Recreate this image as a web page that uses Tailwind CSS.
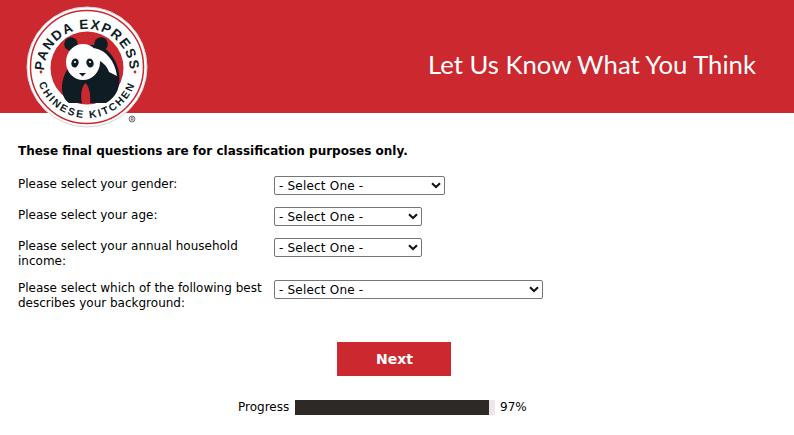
<!DOCTYPE html>
<html><head><meta charset="utf-8"><script src="https://cdn.jsdelivr.net/npm/@tailwindcss/browser@4"></script></head>
<body class="bg-white overflow-hidden font-['Verdana','DejaVu_Sans',sans-serif] text-[12px] leading-[15px] text-black">
<header class="relative h-[113px] bg-[#cb2830] flex items-center justify-end pr-[38px] pt-[14px]">
<h1 class="font-['Lato',sans-serif] text-[25.7px] leading-[34px] text-white">Let Us Know What You Think</h1>
<svg class="absolute left-[24px] top-[4px]" width="126" height="126" viewBox="24 4 126 126">
<circle cx="87" cy="67" r="60" fill="#fff" stroke="#d8d4d4" stroke-width="1"/>
<circle cx="87" cy="67" r="56.5" fill="none" stroke="#cb2830" stroke-width="1.5"/>
<circle cx="87" cy="68" r="36.5" fill="#cb2830"/>
<defs>
<path id="t" d="M 44 72 A 43 43 0 0 1 130 72"/>
<path id="b" d="M 36 67 A 51 51 0 0 0 138 67"/>
</defs>
<text font-family="Liberation Sans" font-weight="700" font-size="13.5" fill="#0f1c24" letter-spacing="1.4"><textPath href="#t" startOffset="50%" text-anchor="middle">PANDA EXPRESS</textPath></text>
<text font-family="Liberation Sans" font-weight="700" font-size="10.5" fill="#0f1c24" letter-spacing="2"><textPath href="#b" startOffset="50%" text-anchor="middle">CHINESE KITCHEN</textPath></text>
<circle cx="41" cy="72" r="1.4" fill="#cb2830"/><circle cx="135" cy="72" r="1.4" fill="#cb2830"/>
<path d="M67 70 C60 82 60 97 69 103 L82 103 C80 95 82 86 85.5 83 C89 86 91 95 90 103 L106 103 C117 97 121 86 119 73 C117 60 110 51 100 45 L78 45 Z" fill="#0f1c24"/>
<circle cx="71" cy="44" r="6.8" fill="#0f1c24"/><circle cx="101" cy="44" r="6.8" fill="#0f1c24"/>
<path d="M94 48 C106 50 115 61 117 76 L109 72 C107 66 102 61 97 60 Z" fill="#fff"/>
<ellipse cx="83" cy="62" rx="17" ry="18" fill="#fff"/>
<ellipse cx="75" cy="63" rx="3.6" ry="4.6" transform="rotate(18 75 63)" fill="#0f1c24"/>
<ellipse cx="90" cy="63" rx="3.6" ry="4.6" transform="rotate(-18 90 63)" fill="#0f1c24"/>
<circle cx="75" cy="62" r="1.1" fill="#fff"/><circle cx="90" cy="62" r="1.1" fill="#fff"/>
<path d="M79 73 L86 73 L82.5 76.5Z" fill="#0f1c24"/>
<circle cx="132" cy="119" r="3" fill="none" stroke="#555" stroke-width="0.8"/>
<text x="132" y="121" font-family="Liberation Sans" font-size="4.5" font-weight="700" text-anchor="middle" fill="#555">R</text>
</svg>
</header>
<main class="pl-[18px]">
<p class="pt-[31px] pb-[17px] font-bold text-[12px]">These final questions are for classification purposes only.</p>
<div class="grid grid-cols-[256px_1fr] gap-y-[12px]">
<label class="pr-2 translate-y-px">Please select your gender:</label>
<div class="relative h-[19px] w-[171px]"><select class="appearance-none w-full h-full border border-[#767676] rounded-[2px] pl-[4px] pt-[1px] bg-white text-[12px] tracking-[0.2px]"><option>- Select One -</option></select><svg class="absolute right-[4px] top-[6px] pointer-events-none" width="10" height="7" viewBox="0 0 10 7"><path d="M1 1.2 L5 5 L9 1.2" fill="none" stroke="#111" stroke-width="2"/></svg></div>
<label class="pr-2 translate-y-px">Please select your age:</label>
<div class="relative h-[19px] w-[148px]"><select class="appearance-none w-full h-full border border-[#767676] rounded-[2px] pl-[4px] pt-[1px] bg-white text-[12px] tracking-[0.2px]"><option>- Select One -</option></select><svg class="absolute right-[4px] top-[6px] pointer-events-none" width="10" height="7" viewBox="0 0 10 7"><path d="M1 1.2 L5 5 L9 1.2" fill="none" stroke="#111" stroke-width="2"/></svg></div>
<label class="pr-2 translate-y-px">Please select your annual household income:</label>
<div class="relative h-[19px] w-[148px]"><select class="appearance-none w-full h-full border border-[#767676] rounded-[2px] pl-[4px] pt-[1px] bg-white text-[12px] tracking-[0.2px]"><option>- Select One -</option></select><svg class="absolute right-[4px] top-[6px] pointer-events-none" width="10" height="7" viewBox="0 0 10 7"><path d="M1 1.2 L5 5 L9 1.2" fill="none" stroke="#111" stroke-width="2"/></svg></div>
<label class="pr-2 translate-y-px">Please select which of the following best describes your background:</label>
<div class="relative h-[19px] w-[269px]"><select class="appearance-none w-full h-full border border-[#767676] rounded-[2px] pl-[4px] pt-[1px] bg-white text-[12px] tracking-[0.2px]"><option>- Select One -</option></select><svg class="absolute right-[4px] top-[6px] pointer-events-none" width="10" height="7" viewBox="0 0 10 7"><path d="M1 1.2 L5 5 L9 1.2" fill="none" stroke="#111" stroke-width="2"/></svg></div>
</div>
<div class="pl-[319px] pt-[32px]"><button class="w-[114px] h-[34px] bg-[#cb2830] text-white font-bold text-[14px] pl-[1px]">Next</button></div>
<div class="flex items-center pl-[220px] pt-[24px]">
<span class="w-[57px]">Progress</span>
<div class="w-[200px] h-[15px] bg-[#efe5e8]"><div class="h-full w-[194px] bg-[#2d2926]"></div></div>
<span class="pl-[5px]">97%</span>
</div>
</main>
</body></html>
